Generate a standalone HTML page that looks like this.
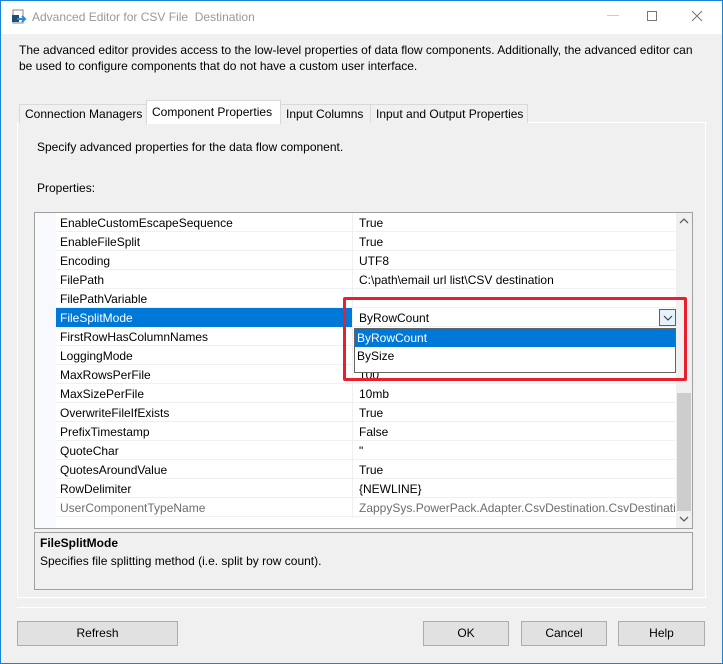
<!DOCTYPE html>
<html><head><meta charset="utf-8"><style>
*{box-sizing:border-box;margin:0;padding:0}
body{width:723px;height:664px;background:#f0f0f0;font-family:"Liberation Sans",sans-serif;font-size:12px;color:#000;position:relative;overflow:hidden}
.a{position:absolute}
.win{left:0;top:0;width:723px;height:664px;border:1px solid #1883d7}
.title{left:1px;top:1px;width:721px;height:33px;background:#fff}
.tab{position:absolute;top:104px;height:19px;border:1px solid #d9d9d9;border-bottom:none;background:#f0f0f0;padding:2px 5px 0 5px;white-space:nowrap;font-size:12px}
.row{position:absolute;left:56px;width:620px;height:19px;border-bottom:1px solid #eef0f4}
.row .n{position:absolute;left:4px;top:3px}
.row .v{position:absolute;left:303px;top:3px;white-space:nowrap}
.btn{position:absolute;top:621px;height:25px;background:#e1e1e1;border:1px solid #adadad;text-align:center;line-height:23px}
</style></head><body>
<div class="a win"></div>
<div class="a title"></div>
<svg class="a" style="left:11px;top:9px" width="16" height="16"><rect x="2" y="1" width="10" height="13" fill="#fff" stroke="#888"/><rect x="1" y="6" width="7" height="7" fill="#1f4e79"/><path d="M6 10h8M11 7l3 3-3 3" stroke="#2b88d8" stroke-width="2" fill="none"/></svg>
<div class="a" style="left:32px;top:10px;color:#999;font-size:12px">Advanced Editor for CSV File&nbsp; Destination</div>
<div class="a" style="left:607px;top:15px;width:12px;height:1px;background:#ccc"></div>
<div class="a" style="left:647px;top:11px;width:10px;height:10px;border:1px solid #777"></div>
<svg class="a" style="left:691px;top:10px" width="12" height="12"><path d="M1 1L11 11M11 1L1 11" stroke="#777"/></svg>
<div class="a" style="left:19px;top:42px;line-height:16px;width:690px">The advanced editor provides access to the low-level properties of data flow components. Additionally, the advanced editor can be used to configure components that do not have a custom user interface.</div>
<div class="a" style="left:17px;top:122px;width:689px;height:476px;border:1px solid #fff;background:#f0f0f0"></div>
<div class="tab" style="left:19px;width:128px">Connection Managers</div>
<div class="tab" style="left:146px;top:100px;height:24px;width:135px;background:#fff;padding-top:4px">Component Properties</div>
<div class="tab" style="left:280px;width:91px">Input Columns</div>
<div class="tab" style="left:370px;width:158px">Input and Output Properties</div>
<div class="a" style="left:37px;top:140px">Specify advanced properties for the data flow component.</div>
<div class="a" style="left:37px;top:181px">Properties:</div>
<div class="a" style="left:34px;top:212px;width:659px;height:317px;border:1px solid #a0a0a0;background:#fff"></div>
<div class="a" style="left:35px;top:213px;width:21px;height:315px;background:#f7f9fd"></div>
<div class="row" style="top:213px"><span class="n">EnableCustomEscapeSequence</span><span class="v">True</span></div>
<div class="row" style="top:232px"><span class="n">EnableFileSplit</span><span class="v">True</span></div>
<div class="row" style="top:251px"><span class="n">Encoding</span><span class="v">UTF8</span></div>
<div class="row" style="top:270px"><span class="n">FilePath</span><span class="v">C:\path\email url list\CSV destination</span></div>
<div class="row" style="top:289px"><span class="n">FilePathVariable</span><span class="v"></span></div>
<div class="row" style="top:308px"><span class="a" style="left:0;top:0;width:297px;height:19px;background:#0078d7"></span><span class="n" style="color:#fff">FileSplitMode</span><span class="v">ByRowCount</span></div>
<div class="row" style="top:327px"><span class="n">FirstRowHasColumnNames</span></div>
<div class="row" style="top:346px"><span class="n">LoggingMode</span></div>
<div class="row" style="top:365px"><span class="n">MaxRowsPerFile</span><span class="v">100</span></div>
<div class="row" style="top:384px"><span class="n">MaxSizePerFile</span><span class="v">10mb</span></div>
<div class="row" style="top:403px"><span class="n">OverwriteFileIfExists</span><span class="v">True</span></div>
<div class="row" style="top:422px"><span class="n">PrefixTimestamp</span><span class="v">False</span></div>
<div class="row" style="top:441px"><span class="n">QuoteChar</span><span class="v">"</span></div>
<div class="row" style="top:460px"><span class="n">QuotesAroundValue</span><span class="v">True</span></div>
<div class="row" style="top:479px"><span class="n">RowDelimiter</span><span class="v">{NEWLINE}</span></div>
<div class="row" style="top:498px;width:621px;overflow:hidden;color:#6d6d6d"><span class="n">UserComponentTypeName</span><span class="v">ZappySys.PowerPack.Adapter.CsvDestination.CsvDestination</span></div>
<div class="a" style="left:352px;top:213px;width:1px;height:305px;background:#eef0f4"></div>
<div class="a" style="left:676px;top:213px;width:16px;height:315px;background:#f0f0f0"></div>
<div class="a" style="left:677px;top:393px;width:14px;height:118px;background:#cdcdcd"></div>
<svg class="a" style="left:679px;top:217px" width="10" height="8"><path d="M1 6L5 2L9 6" stroke="#606060" stroke-width="1.3" fill="none"/></svg>
<svg class="a" style="left:679px;top:515px" width="10" height="8"><path d="M1 2L5 6L9 2" stroke="#606060" stroke-width="1.3" fill="none"/></svg>
<div class="a" style="left:659px;top:309px;width:17px;height:17px;border:1px solid #0078d7;background:#e5f1fb"></div>
<svg class="a" style="left:663px;top:315px" width="10" height="6"><path d="M1 1L5 5L9 1" stroke="#333" fill="none"/></svg>
<div class="a" style="left:354px;top:328px;width:322px;height:45px;border:1px solid #646464;background:#fff"></div>
<div class="a" style="left:355px;top:329px;width:320px;height:18px;background:#0078d7;color:#fff;padding:2px 0 0 2px">ByRowCount</div>
<div class="a" style="left:357px;top:349px">BySize</div>
<div class="a" style="left:343px;top:297px;width:344px;height:84px;border:3px solid #e8202e;border-radius:2px"></div>
<div class="a" style="left:34px;top:532px;width:659px;height:58px;border:1px solid #a0a0a0;background:#f0f0f0"></div>
<div class="a" style="left:40px;top:536px;font-weight:bold">FileSplitMode</div>
<div class="a" style="left:40px;top:554px">Specifies file splitting method (i.e. split by row count).</div>
<div class="a" style="left:17px;top:607px;width:689px;height:1px;background:#a0a0a0;border-bottom:1px solid #fff"></div>
<div class="btn" style="left:17px;width:161px">Refresh</div>
<div class="btn" style="left:423px;width:86px">OK</div>
<div class="btn" style="left:521px;width:86px">Cancel</div>
<div class="btn" style="left:618px;width:87px">Help</div>
</body></html>
